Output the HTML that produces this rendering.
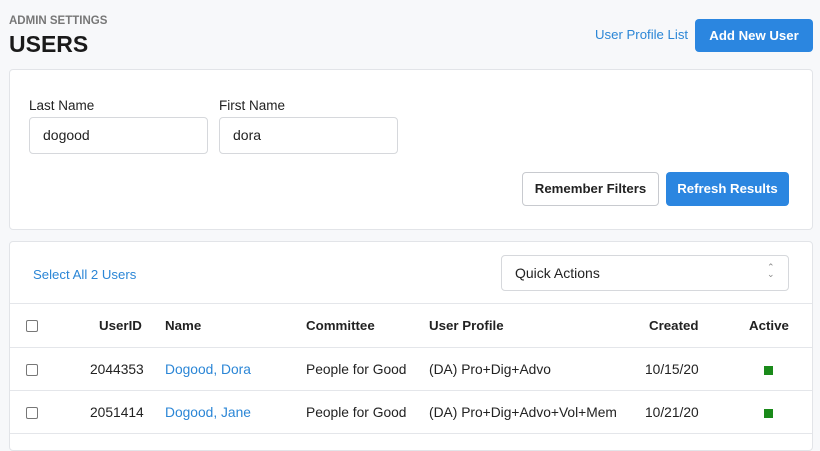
<!DOCTYPE html>
<html><head><style>
*{box-sizing:border-box;margin:0;padding:0}
body{width:820px;height:443px;overflow:hidden;background:#f7f8fa;font-family:"Liberation Sans",sans-serif;color:#222;position:relative;font-size:13.8px}
.a{position:absolute}
.card{position:absolute;background:#fff;border:1px solid #e2e4e8;border-radius:4px}
.inp{position:absolute;border:1px solid #d6d8dc;border-radius:4px;background:#fff;padding-left:13px;line-height:34px;font-size:14px}
.btn{position:absolute;border-radius:4px;font-weight:bold;font-size:13.2px;text-align:center}
.blue{color:#2b86d6}
.hl{position:absolute;left:10px;width:802px;height:1px;background:#e4e6ea}
.cb{position:absolute;width:12px;height:12px;border:1px solid #777;border-radius:2px;background:#fff}
.sq{position:absolute;width:9px;height:9px;background:#1a8a1a}
.th{position:absolute;font-weight:bold;font-size:13.3px}
</style></head><body>
<div class="a" style="left:9px;top:15px;font-size:11.5px;font-weight:bold;color:#777">ADMIN SETTINGS</div>
<div class="a" style="left:9px;top:31px;font-size:23px;font-weight:bold;color:#1a1a1a">USERS</div>
<div class="a blue" style="left:595px;top:27px;font-size:13.2px">User Profile List</div>
<div class="btn" style="left:695px;top:19px;width:118px;height:33px;line-height:33px;background:#2b86e0;color:#fff">Add New User</div>

<div class="card" style="left:9px;top:69px;width:804px;height:161px"></div>
<div class="a" style="left:29px;top:98px;font-size:13.5px">Last Name</div>
<div class="a" style="left:219px;top:98px;font-size:13.5px">First Name</div>
<div class="inp" style="left:29px;top:117px;width:179px;height:37px">dogood</div>
<div class="inp" style="left:219px;top:117px;width:179px;height:37px">dora</div>
<div class="btn" style="left:522px;top:172px;width:137px;height:34px;line-height:32px;border:1px solid #c8cacf;background:#fff;color:#222">Remember Filters</div>
<div class="btn" style="left:666px;top:172px;width:123px;height:34px;line-height:34px;background:#2b86e0;color:#fff">Refresh Results</div>

<div class="card" style="left:9px;top:241px;width:804px;height:210px"></div>
<div class="a blue" style="left:33px;top:267px;font-size:13.2px">Select All 2 Users</div>
<div class="inp" style="left:501px;top:255px;width:288px;height:36px;line-height:35px">Quick Actions</div>
<div class="a" style="left:767px;top:264px;font-size:9px;color:#888;line-height:7px">&#8963;<br>&#8964;</div>
<div class="hl" style="top:303px"></div>
<div class="hl" style="top:347px"></div>
<div class="hl" style="top:390px"></div>
<div class="hl" style="top:433px"></div>
<div class="cb" style="left:26px;top:320px"></div>
<div class="th" style="left:99px;top:318px">UserID</div>
<div class="th" style="left:165px;top:318px">Name</div>
<div class="th" style="left:306px;top:318px">Committee</div>
<div class="th" style="left:429px;top:318px">User Profile</div>
<div class="th" style="left:649px;top:318px">Created</div>
<div class="th" style="left:749px;top:318px">Active</div>

<div class="cb" style="left:26px;top:364px"></div>
<div class="a" style="left:90px;top:362px">2044353</div>
<div class="a blue" style="left:165px;top:362px">Dogood, Dora</div>
<div class="a" style="left:306px;top:362px">People for Good</div>
<div class="a" style="left:429px;top:362px">(DA) Pro+Dig+Advo</div>
<div class="a" style="left:645px;top:362px">10/15/20</div>
<div class="sq" style="left:764px;top:366px"></div>

<div class="cb" style="left:26px;top:407px"></div>
<div class="a" style="left:90px;top:405px">2051414</div>
<div class="a blue" style="left:165px;top:405px">Dogood, Jane</div>
<div class="a" style="left:306px;top:405px">People for Good</div>
<div class="a" style="left:429px;top:405px">(DA) Pro+Dig+Advo+Vol+Mem</div>
<div class="a" style="left:645px;top:405px">10/21/20</div>
<div class="sq" style="left:764px;top:409px"></div>
</body></html>
